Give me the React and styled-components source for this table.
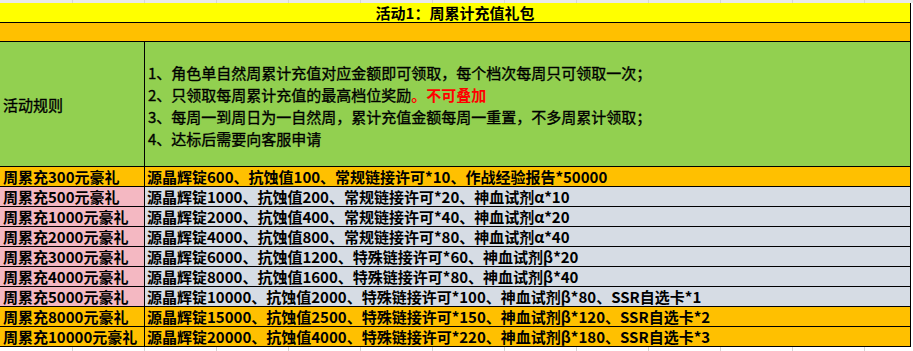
import React from 'react'
import styled, { createGlobalStyle } from 'styled-components'

const GlobalStyle = createGlobalStyle`
  body {
    margin: 0;
    background: #fff;
    font-family: "Noto Sans CJK SC", "Liberation Sans", sans-serif;
    color: #000;
  }
`

const rules = [
  { text: '1、角色单自然周累计充值对应金额即可领取，每个档次每周只可领取一次；' },
  { text: '2、只领取每周累计充值的最高档位奖励', warn: '。不可叠加' },
  { text: '3、每周一到周日为一自然周，累计充值金额每周一重置，不多周累计领取；' },
  { text: '4、达标后需要向客服申请' },
]

const prizes = [
  { label: '周累充300元豪礼', text: '源晶辉锭600、抗蚀值100、常规链接许可*10、作战经验报告*50000', gold: true },
  { label: '周累充500元豪礼', text: '源晶辉锭1000、抗蚀值200、常规链接许可*20、神血试剂α*10' },
  { label: '周累充1000元豪礼', text: '源晶辉锭2000、抗蚀值400、常规链接许可*40、神血试剂α*20' },
  { label: '周累充2000元豪礼', text: '源晶辉锭4000、抗蚀值800、常规链接许可*80、神血试剂α*40' },
  { label: '周累充3000元豪礼', text: '源晶辉锭6000、抗蚀值1200、特殊链接许可*60、神血试剂β*20' },
  { label: '周累充4000元豪礼', text: '源晶辉锭8000、抗蚀值1600、特殊链接许可*80、神血试剂β*40' },
  { label: '周累充5000元豪礼', text: '源晶辉锭10000、抗蚀值2000、特殊链接许可*100、神血试剂β*80、SSR自选卡*1' },
  { label: '周累充8000元豪礼', text: '源晶辉锭15000、抗蚀值2500、特殊链接许可*150、神血试剂β*120、SSR自选卡*2', gold: true },
  { label: '周累充10000元豪礼', text: '源晶辉锭20000、抗蚀值4000、特殊链接许可*220、神血试剂β*180、SSR自选卡*3', gold: true },
]

const gridCols = Array.from({ length: 13 })

const App = () => {
  return (
    <>
      <GlobalStyle />
      <Sheet>
        <GridStrip height={3} shade>
          {gridCols.map((_, i) => <GridCol key={i} first={i === 0} />)}
        </GridStrip>
        <Table>
          <TitleRow>活动1：周累计充值礼包</TitleRow>
          <BlankRow />
          <Row height={125}>
            <LabelCell bg="#92d050">活动规则</LabelCell>
            <RulesCell>
              {rules.map((r, i) => (
                <RuleLine key={i}>
                  {r.text}
                  {r.warn ? <Warn>{r.warn}</Warn> : null}
                </RuleLine>
              ))}
            </RulesCell>
          </Row>
          {prizes.map((p) => (
            <Row key={p.label} height={20}>
              <LabelCell bg={p.gold ? '#ffc000' : '#f4b8c2'} bold>{p.label}</LabelCell>
              <ContentCell bg={p.gold ? '#ffc000' : '#d6dce4'}>{p.text}</ContentCell>
            </Row>
          ))}
        </Table>
        <GridStrip height={4}>
          {gridCols.map((_, i) => <GridCol key={i} first={i === 0} />)}
        </GridStrip>
      </Sheet>
    </>
  )
}

export default App

const Sheet = styled.div`
  width: 913px;
  height: 351px;
  overflow: hidden;
  display: flex;
  flex-direction: column;
`

const GridStrip = styled.div`
  flex: none;
  display: flex;
  height: ${p => p.height}px;
  background: ${p => (p.shade ? '#e9e9e9' : '#fff')};
`

const GridCol = styled.div`
  flex: none;
  box-sizing: border-box;
  width: ${p => (p.first ? 73 : 72)}px;
  border-right: 1px solid #d4d4d4;
`

const Table = styled.div`
  flex: none;
  width: 911px;
  box-sizing: border-box;
  border-right: 1px solid #000;
  font-size: 15px;
`

const TitleRow = styled.div`
  height: 20px;
  box-sizing: border-box;
  border-bottom: 1px solid #000;
  background: #ffff00;
  text-align: center;
  font-weight: 700;
  line-height: 19px;
  white-space: nowrap;
`

const BlankRow = styled.div`
  height: 19px;
  box-sizing: border-box;
  border-bottom: 1px solid #000;
  background: #ffc000;
`

const Row = styled.div`
  display: grid;
  grid-template-columns: 145px 1fr;
  height: ${p => p.height}px;
  box-sizing: border-box;
  border-bottom: 1px solid #000;
`

const LabelCell = styled.div`
  display: flex;
  align-items: center;
  box-sizing: border-box;
  padding: 0 0 0 3px;
  background: ${p => p.bg};
  border-right: 1px solid #000;
  font-weight: ${p => (p.bold ? 700 : 400)};
  -webkit-text-stroke: ${p => (p.bold ? 0 : 0.35)}px #000;
  white-space: nowrap;
  overflow: hidden;
`

const ContentCell = styled.div`
  display: flex;
  align-items: center;
  padding-left: 2px;
  background: ${p => p.bg};
  font-weight: 700;
  white-space: nowrap;
  overflow: hidden;
`

const RulesCell = styled.div`
  display: flex;
  flex-direction: column;
  justify-content: center;
  padding: 4px 0 0 3px;
  background: #92d050;
  -webkit-text-stroke: 0.35px #000;
`

const RuleLine = styled.div`
  line-height: 22px;
  white-space: nowrap;
`

const Warn = styled.span`
  color: #ff0000;
  font-weight: 700;
  -webkit-text-stroke: 0;
`
